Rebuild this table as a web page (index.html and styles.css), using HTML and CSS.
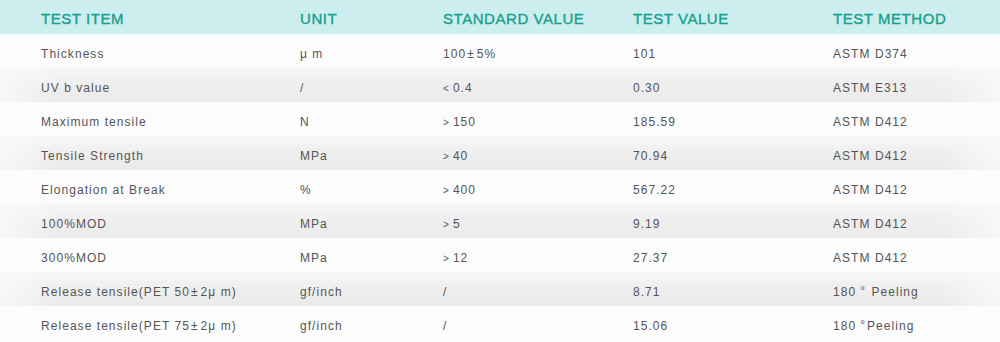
FILE: index.html
```html
<!DOCTYPE html>
<html>
<head>
<meta charset="utf-8">
<link rel="stylesheet" href="styles.css">
</head>
<body>
<div class="table">
  <div class="row head">
    <div class="c c1">TEST ITEM</div><div class="c c2">UNIT</div><div class="c c3">STANDARD VALUE</div><div class="c c4">TEST VALUE</div><div class="c c5">TEST METHOD</div>
  </div>
  <div class="row odd">
    <div class="c c1">Thickness</div><div class="c c2">μ m</div><div class="c c3">100<span class="sym">±</span>5%</div><div class="c c4">101</div><div class="c c5">ASTM D374</div>
  </div>
  <div class="row even">
    <div class="c c1">UV b value</div><div class="c c2">/</div><div class="c c3"><span class="lt">&lt;</span>0.4</div><div class="c c4">0.30</div><div class="c c5">ASTM E313</div>
  </div>
  <div class="row odd">
    <div class="c c1">Maximum tensile</div><div class="c c2">N</div><div class="c c3"><span class="lt">&gt;</span>150</div><div class="c c4">185.59</div><div class="c c5">ASTM D412</div>
  </div>
  <div class="row even">
    <div class="c c1">Tensile Strength</div><div class="c c2">MPa</div><div class="c c3"><span class="lt">&gt;</span>40</div><div class="c c4">70.94</div><div class="c c5">ASTM D412</div>
  </div>
  <div class="row odd">
    <div class="c c1">Elongation at Break</div><div class="c c2">%</div><div class="c c3"><span class="lt">&gt;</span>400</div><div class="c c4">567.22</div><div class="c c5">ASTM D412</div>
  </div>
  <div class="row even">
    <div class="c c1">100%MOD</div><div class="c c2">MPa</div><div class="c c3"><span class="lt">&gt;</span>5</div><div class="c c4">9.19</div><div class="c c5">ASTM D412</div>
  </div>
  <div class="row odd">
    <div class="c c1">300%MOD</div><div class="c c2">MPa</div><div class="c c3"><span class="lt">&gt;</span>12</div><div class="c c4">27.37</div><div class="c c5">ASTM D412</div>
  </div>
  <div class="row even">
    <div class="c c1">Release tensile(PET 50<span class="sym">±</span>2μ m)</div><div class="c c2">gf/inch</div><div class="c c3">/</div><div class="c c4">8.71</div><div class="c c5">180<span class="deg">°</span>&nbsp;Peeling</div>
  </div>
  <div class="row odd">
    <div class="c c1">Release tensile(PET 75<span class="sym">±</span>2μ m)</div><div class="c c2">gf/inch</div><div class="c c3">/</div><div class="c c4">15.06</div><div class="c c5">180<span class="deg">°</span>Peeling</div>
  </div>
</div>
</body>
</html>
```
FILE: styles.css
```css
html, body {
  margin: 0;
  padding: 0;
  background: #ffffff;
}
.table {
  width: 1000px;
  font-family: "Liberation Sans", Arial, sans-serif;
}
.row {
  display: grid;
  grid-template-columns: 300px 143px 190px 200px 167px;
  height: 34px;
  align-items: center;
}
.row:last-child {
  height: 36px;
}
.c1 { padding-left: 41px; }
.head {
  background: #cdeeee;
  color: #15a08c;
  font-size: 15px;
  letter-spacing: 0.55px;
  -webkit-text-stroke: 0.35px #15a08c;
}
.head .c { position: relative; top: 1px; }
.odd, .even {
  font-size: 12px;
  letter-spacing: 1.05px;
  color: #555555;
}
.odd .c, .even .c { position: relative; top: 3px; }
.row:last-child .c { top: 2px; }
.odd {
  background: #fcfcfc;
}
.even {
  background:
    linear-gradient(to right, rgba(250,250,250,0.8) 0%, rgba(250,250,250,0) 6%, rgba(250,250,250,0) 94%, rgba(250,250,250,0.8) 100%),
    linear-gradient(to bottom, #f6f6f6 0%, #eeeeee 55%, #ebebeb 100%);
}
.sym {
  margin: 0 2px 0 1px;
}
.lt {
  font-size: 10px;
  margin-right: 3px;
}
.deg {
  margin: 0 1px 0 4px;
  position: relative;
  top: -1px;
}
```
